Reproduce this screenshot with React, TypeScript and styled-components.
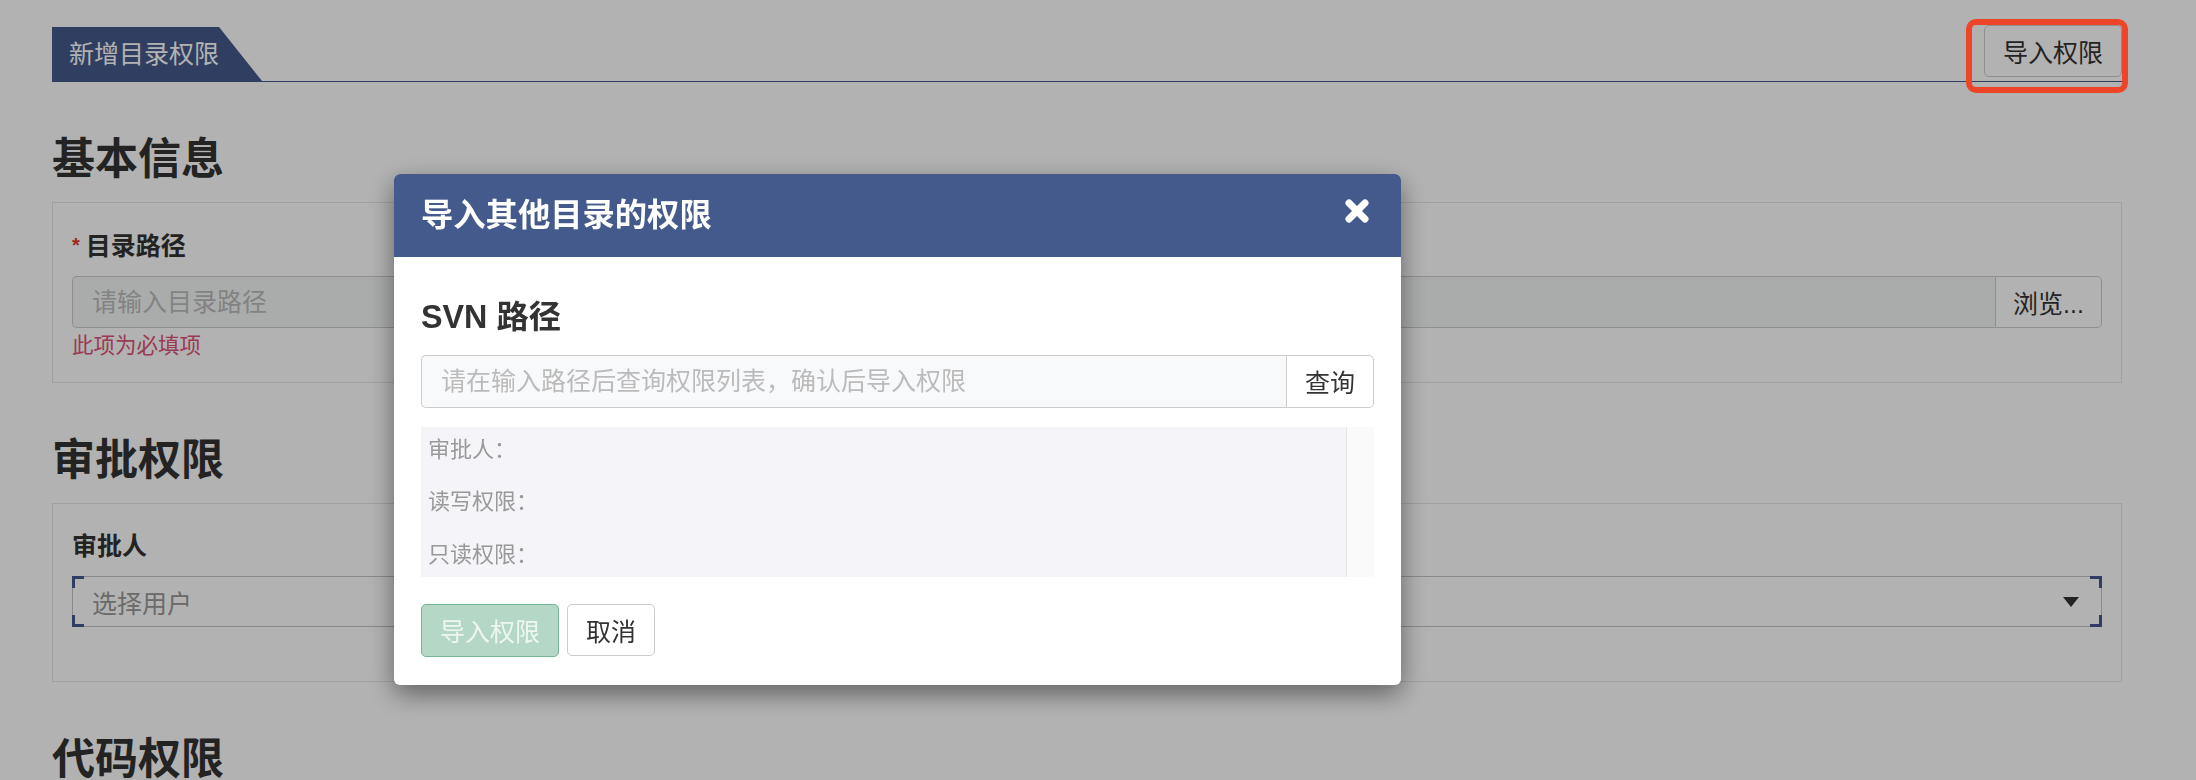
import React from 'react'
import styled, { createGlobalStyle } from 'styled-components'

const navy = '#455a8c'

const GlobalStyle = createGlobalStyle`
  html, body {
    margin: 0;
    background: #fff;
    font-family: "Liberation Sans", "Noto Sans CJK SC", sans-serif;
    color: #333;
  }
  * {
    box-sizing: border-box;
  }
`

// ============== PAGE ==============
const Page = styled.div`
  height: 100vh;
  overflow: hidden;
  padding: 25px 74px 0 52px;
`

const PageHeader = styled.div`
  display: flex;
  justify-content: space-between;
  align-items: flex-end;
  border-bottom: 1px solid ${navy};
`

const Tab = styled.div`
  height: 54px;
  padding: 0 43px 0 17px;
  background: ${navy};
  clip-path: polygon(0 0, calc(100% - 43px) 0, 100% 100%, 0 100%);
  color: #fff;
  font-size: 25px;
  line-height: 54px;
`

const Button = styled.button<{ $variant?: 'default' | 'success' }>`
  height: ${(p) => (p.$variant === 'success' ? '53px' : '52px')};
  padding: 0 18px;
  border: 1px solid ${(p) => (p.$variant === 'success' ? '#74b594' : '#ccc')};
  border-radius: 5px;
  background: ${(p) => (p.$variant === 'success' ? '#b5d8c6' : '#fff')};
  color: ${(p) => (p.$variant === 'success' ? '#eef6f1' : '#333')};
  font-family: inherit;
  font-size: 25px;
  cursor: pointer;
`

const HeaderButton = styled(Button)`
  margin-bottom: 4px;
`

const SectionTitle = styled.h3`
  margin: 54px 0 20px;
  font-size: 43px;
  font-weight: bold;
  line-height: 46px;
  color: #333;
`

const Card = styled.div`
  border: 1px solid #e6e6e6;
  padding: 25px 19px 21px;
`

const Label = styled.label`
  display: block;
  margin-bottom: 12px;
  font-size: 25px;
  font-weight: bold;
  line-height: 35px;
  color: #333;
`

const Star = styled.span`
  color: #e23b2e;
  font-size: 20px;
  vertical-align: 3px;
  margin-right: 6px;
`

const HelpText = styled.div`
  min-height: 30px;
  margin-top: 3px;
  font-size: 21.5px;
  line-height: 30px;
  color: #df5379;
`

const InputGroup = styled.div<{ $height: number }>`
  display: flex;
  height: ${(p) => p.$height}px;
`

const TextInput = styled.input<{ $bg: string }>`
  flex: 1;
  min-width: 0;
  border: 1px solid #ccc;
  border-right: none;
  border-radius: 5px 0 0 5px;
  background: ${(p) => p.$bg};
  padding: 0 19px;
  font-family: inherit;
  font-size: 25px;
  color: #333;
  outline: none;

  &::placeholder {
    color: #bbb;
  }
`

const AddonButton = styled.button<{ $width: number }>`
  width: ${(p) => p.$width}px;
  border: 1px solid #ccc;
  border-radius: 0 5px 5px 0;
  background: #fff;
  font-family: inherit;
  font-size: 25px;
  color: #333;
  cursor: pointer;
`

const corner = (pos: string, w: number, h: number) =>
  `linear-gradient(${navy}, ${navy}) ${pos} / ${w}px ${h}px no-repeat`

const Select = styled.div`
  position: relative;
  height: 51px;
  border: 1px solid #c5c5c5;
  padding: 0 22px 0 19px;
  display: flex;
  align-items: center;
  justify-content: space-between;
  font-size: 25px;
  color: #999;

  &::before {
    content: '';
    position: absolute;
    inset: -1px;
    pointer-events: none;
    background: ${corner('left top', 12, 3)}, ${corner('left top', 3, 12)},
      ${corner('right top', 12, 3)}, ${corner('right top', 3, 12)},
      ${corner('left bottom', 12, 3)}, ${corner('left bottom', 3, 12)},
      ${corner('right bottom', 12, 3)}, ${corner('right bottom', 3, 12)};
  }
`

// ============== MODAL ==============
const Overlay = styled.div`
  position: fixed;
  inset: 0;
  background: rgba(0, 0, 0, 0.3);
  padding: 174px 0 0 394px;
`

const Highlight = styled.div`
  position: absolute;
  left: 1966px;
  top: 19px;
  width: 162px;
  height: 74px;
  border: 6px solid #ee4427;
  border-radius: 10px;
`

const Dialog = styled.div`
  width: 1007px;
  background: #fff;
  border-radius: 6px;
  overflow: hidden;
  box-shadow: 0 9px 26px rgba(0, 0, 0, 0.45);
`

const DialogHeader = styled.div`
  display: flex;
  justify-content: space-between;
  align-items: center;
  padding: 24px 32px 24px 27px;
  background: ${navy};
`

const DialogTitle = styled.h4`
  margin: 0;
  font-size: 32.3px;
  font-weight: bold;
  line-height: 34.65px;
  color: #fff;
`

const CloseIcon = styled.svg`
  display: block;
  width: 24px;
  height: 24px;
  margin-top: -8px;
  cursor: pointer;
`

const DialogBody = styled.div`
  padding: 26px 27px 28px;
`

const FieldTitle = styled.h4`
  margin: 17.5px 0 20px;
  font-size: 32.3px;
  font-weight: bold;
  line-height: 34.65px;
  color: #333;
`

const InfoBox = styled.div`
  display: flex;
  height: 150px;
  margin-top: 19px;
  background: #f4f4f9;
`

const InfoList = styled.div`
  flex: 1;
  padding: 8px 7px 7px;
`

const InfoRow = styled.div`
  font-size: 22px;
  line-height: 30px;
  color: #999;

  & + & {
    margin-top: 22.5px;
  }
`

const ScrollTrack = styled.div`
  width: 28px;
  background: #fafafa;
  border-left: 1px solid #e6e6e6;
`

const ButtonRow = styled.div`
  display: flex;
  gap: 8px;
  margin-top: 27px;
`

const App: React.FC = () => {
  return (
    <>
      <GlobalStyle />
      <Page>
        <PageHeader>
          <Tab>新增目录权限</Tab>
          <HeaderButton>导入权限</HeaderButton>
        </PageHeader>

        <SectionTitle>基本信息</SectionTitle>
        <Card>
          <Label>
            <Star>*</Star>目录路径
          </Label>
          <InputGroup $height={52}>
            <TextInput $bg="#f4f7f6" placeholder="请输入目录路径" />
            <AddonButton $width={107}>浏览...</AddonButton>
          </InputGroup>
          <HelpText>此项为必填项</HelpText>
        </Card>

        <SectionTitle>审批权限</SectionTitle>
        <Card>
          <Label>审批人</Label>
          <Select>
            <span>选择用户</span>
            <svg width="16" height="10" viewBox="0 0 16 10">
              <polygon points="0,0 16,0 8,10" fill="#333" />
            </svg>
          </Select>
          <HelpText />
        </Card>

        <SectionTitle>代码权限</SectionTitle>
      </Page>

      <Overlay>
        <Highlight />
        <Dialog>
          <DialogHeader>
            <DialogTitle>导入其他目录的权限</DialogTitle>
            <CloseIcon viewBox="0 0 24 24">
              <path
                d="M4 4 L20 20 M20 4 L4 20"
                stroke="#fff"
                strokeWidth="7"
                strokeLinecap="round"
              />
            </CloseIcon>
          </DialogHeader>
          <DialogBody>
            <FieldTitle>SVN 路径</FieldTitle>
            <InputGroup $height={53}>
              <TextInput
                $bg="#f8f9fb"
                placeholder="请在输入路径后查询权限列表，确认后导入权限"
              />
              <AddonButton $width={88}>查询</AddonButton>
            </InputGroup>
            <InfoBox>
              <InfoList>
                <InfoRow>审批人：</InfoRow>
                <InfoRow>读写权限：</InfoRow>
                <InfoRow>只读权限：</InfoRow>
              </InfoList>
              <ScrollTrack />
            </InfoBox>
            <ButtonRow>
              <Button $variant="success">导入权限</Button>
              <Button>取消</Button>
            </ButtonRow>
          </DialogBody>
        </Dialog>
      </Overlay>
    </>
  )
}

export default App
